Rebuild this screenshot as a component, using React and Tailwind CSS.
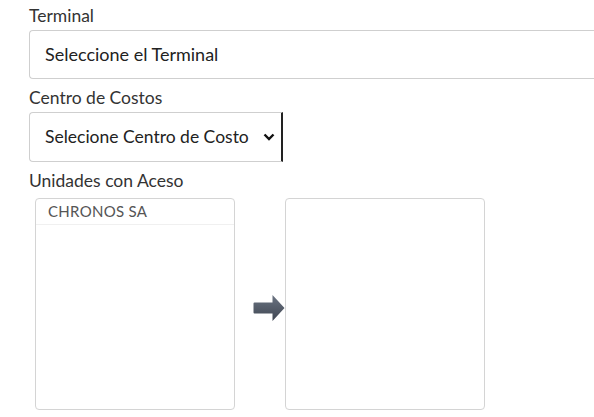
export default function App() {
  return (
    <div className="w-[594px] h-[417px] overflow-hidden bg-white font-['Lato',sans-serif]">
      <div className="pl-[29px] pt-[5px]">
        {/* Terminal */}
        <label className="block text-[17.5px] leading-[22px] text-[#333]">Terminal</label>
        <div className="mt-[3px] flex h-[49px] w-[600px] items-center rounded-l-[4px] border border-r-0 border-[#cfcfcf] pl-[15px] text-[18px] text-[#222]">
          Seleccione el Terminal
        </div>

        {/* Centro de Costos */}
        <label className="mt-[8px] block text-[17.5px] leading-[22px] text-[#333]">Centro de Costos</label>
        <div className="mt-[3px] flex h-[50px] w-[254px] items-center justify-between rounded-l-[4px] border border-r-2 border-[#cfcfcf] border-r-[#222] pl-[15px] pr-[6px] text-[17.5px] text-[#222]">
          <span>Selecione Centro de Costo</span>
          <svg width="12" height="8" viewBox="0 0 12 8">
            <path d="M1.5 1.5 L6 6 L10.5 1.5" fill="none" stroke="#111" strokeWidth="2.4" />
          </svg>
        </div>

        {/* Unidades */}
        <label className="mt-[8px] block text-[17.5px] leading-[22px] text-[#333]">Unidades con Aceso</label>
        <div className="mt-[6px] flex items-start">
          <div className="ml-[6px] h-[212px] w-[200px] rounded-[4px] border border-[#d4d4d4]">
            <div className="border-b border-[#f0f0f0] pb-[3px] pl-[12px] pt-[3px] text-[15px] leading-[19px] tracking-[0.3px] text-[#555]">
              CHRONOS SA
            </div>
          </div>
          <div className="ml-[18px] mt-[96px]">
            <svg width="32" height="28" viewBox="0 0 32 28">
              <defs>
                <linearGradient id="ag" x1="0" y1="0" x2="0" y2="1">
                  <stop offset="0" stopColor="#6b7482" />
                  <stop offset="1" stopColor="#3f4652" />
                </linearGradient>
              </defs>
              <path d="M1.5 8.5 Q0.5 8.5 0.5 9.5 L0.5 18.5 Q0.5 19.5 1.5 19.5 L19.5 19.5 L19.5 27 L31.5 14 L19.5 1 L19.5 8.5 Z" fill="url(#ag)" />
            </svg>
          </div>
          <div className="h-[212px] w-[200px] rounded-[4px] border border-[#d4d4d4]" />
        </div>
      </div>
    </div>
  );
}
